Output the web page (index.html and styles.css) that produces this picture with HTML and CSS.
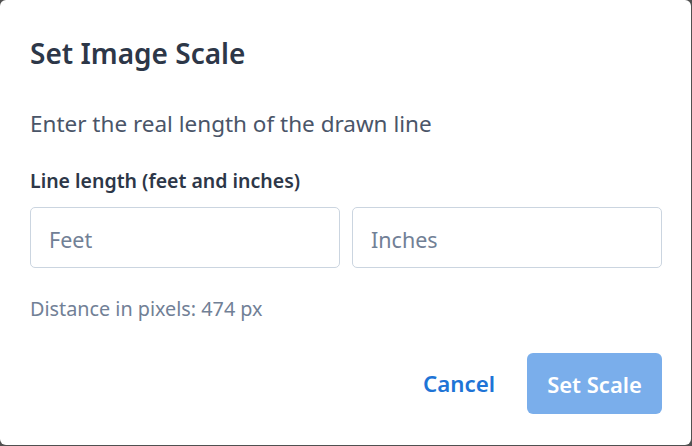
FILE: index.html
```html
<!DOCTYPE html>
<html>
<head>
<meta charset="utf-8">
<link rel="stylesheet" href="styles.css">
</head>
<body>
<div class="modal">
  <h2 class="title">Set Image Scale</h2>
  <p class="desc">Enter the real length of the drawn line</p>
  <label class="label">Line length (feet and inches)</label>
  <div class="inputs">
    <input class="field" type="text" placeholder="Feet">
    <input class="field" type="text" placeholder="Inches">
  </div>
  <p class="distance">Distance in pixels: 474 px</p>
  <div class="actions">
    <button class="btn-cancel">Cancel</button>
    <button class="btn-primary">Set Scale</button>
  </div>
</div>
</body>
</html>
```
FILE: styles.css
```css
html, body {
  margin: 0;
  padding: 0;
  background: #505050;
  width: 692px;
  height: 446px;
  overflow: hidden;
}
body {
  font-family: "Noto Sans", "Open Sans", sans-serif;
}
.modal {
  box-sizing: border-box;
  width: 691px;
  height: 445px;
  background: #ffffff;
  border-radius: 6px;
  padding: 35px 29px 0 30px;
  display: flex;
  flex-direction: column;
}
.title {
  margin: 0;
  font-size: 28px;
  line-height: 36px;
  font-weight: 600;
  color: #2d3748;
}
.desc {
  margin: 39px 0 0 0;
  font-size: 22.5px;
  line-height: 28px;
  color: #4a5568;
}
.label {
  margin-top: 31px;
  font-size: 19.5px;
  line-height: 24px;
  font-weight: 600;
  color: #2d3748;
}
.inputs {
  margin-top: 14px;
  display: grid;
  grid-template-columns: 1fr 1fr;
  gap: 12px;
}
.field {
  box-sizing: border-box;
  height: 61px;
  border: 1px solid #cbd5e0;
  border-radius: 5px;
  padding: 4px 18px 0 18px;
  font-family: inherit;
  font-size: 21.5px;
  color: #2d3748;
  background: #fff;
  outline: none;
  min-width: 0;
}
.field::placeholder {
  color: #718096;
}
.distance {
  margin: 29px 0 0 0;
  font-size: 19.8px;
  line-height: 24px;
  color: #718096;
}
.actions {
  margin-top: 32px;
  display: flex;
  justify-content: flex-end;
  align-items: center;
  gap: 18px;
}
.btn-cancel {
  background: none;
  border: none;
  padding: 0 14px;
  height: 61px;
  font-family: inherit;
  font-size: 22.3px;
  font-weight: 600;
  color: #1e74d6;
}
.btn-primary {
  box-sizing: border-box;
  width: 135px;
  height: 61px;
  border: none;
  border-radius: 6px;
  background: #7aaeeb;
  color: #ffffff;
  font-family: inherit;
  font-size: 22px;
  font-weight: 600;
}
```
